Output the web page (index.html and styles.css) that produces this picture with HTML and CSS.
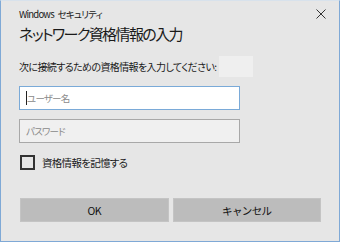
FILE: index.html
```html
<!DOCTYPE html>
<html lang="ja">
<head>
  <meta charset="UTF-8">
  <title>Windows セキュリティ</title>
  <link rel="stylesheet" href="styles.css">
</head>
<body>
  <div class="window">
    <div class="titlebar">
      <span class="title">Windows セキュリティ</span>
      <svg class="close" width="10" height="10" viewBox="0 0 10 10">
        <path d="M0.5 0.5 L9.5 9.5 M9.5 0.5 L0.5 9.5" stroke="#333" stroke-width="1" fill="none"/>
      </svg>
    </div>
    <div class="content">
      <h1>ネットワーク資格情報の入力</h1>
      <div class="desc">
        <span>次に接続するための資格情報を入力してください:</span>
        <span class="server"></span>
      </div>
      <div class="field active"><span class="caret"></span>ユーザー名</div>
      <div class="field">パスワード</div>
      <label class="remember"><span class="box"></span>資格情報を記憶する</label>
      <div class="buttons">
        <button class="btn">OK</button>
        <button class="btn">キャンセル</button>
      </div>
    </div>
  </div>
</body>
</html>
```

FILE: styles.css
```css
* {
  margin: 0;
  padding: 0;
  box-sizing: border-box;
}

body {
  font-family: "Noto Sans CJK JP", "Noto Sans", sans-serif;
  font-feature-settings: "palt";
  color: #1a1a1a;
  background: #e6e6e6;
}

.window {
  width: 340px;
  height: 242px;
  background: #e6e6e6;
  border: 1px solid #7fa9d6;
  border-top-color: #d8e2ec;
}

.titlebar {
  height: 25px;
  display: flex;
  align-items: center;
  justify-content: space-between;
  padding: 0 13px 0 18px;
  font-size: 9.5px;
  letter-spacing: -0.8px;
  word-spacing: 2.5px;
}

.close {
  margin-top: 1px;
}

.content {
  padding: 0 18px;
}

h1 {
  font-size: 15px;
  font-weight: normal;
  line-height: 20px;
  letter-spacing: -1.6px;
  margin-top: -2px;
  height: 24px;
}

.desc {
  display: flex;
  align-items: center;
  font-size: 10px;
  letter-spacing: -0.6px;
  margin-top: 8px;
  height: 21px;
}

.server {
  width: 34px;
  height: 21px;
  background: #efefef;
  margin-left: 3px;
}

.field {
  width: 221px;
  height: 24px;
  border: 1px solid #a8a8a8;
  background: #f0f0f0;
  color: #8a8a8a;
  font-size: 9.5px;
  letter-spacing: -0.8px;
  display: flex;
  align-items: center;
  padding-left: 6px;
  margin-top: 9px;
}

.field.active {
  border-color: #7aaad8;
  background: #fff;
}

.caret {
  width: 1px;
  height: 14px;
  background: #222;
}

.field + .field {
  margin-top: 9px;
}

.remember {
  display: flex;
  align-items: center;
  font-size: 10.5px;
  letter-spacing: -0.7px;
  margin-top: 12px;
  padding-left: 1px;
}

.box {
  width: 15px;
  height: 15px;
  border: 2px solid #333;
  margin-right: 7px;
}

.buttons {
  display: flex;
  gap: 4px;
  margin-top: 28px;
  padding-left: 1px;
}

.btn {
  width: 149px;
  height: 24px;
  border: 1px solid #c4c4c4;
  background: #bcbcbc;
  font-family: inherit;
  font-size: 10.5px;
  letter-spacing: -0.6px;
  color: #111;
}
```
